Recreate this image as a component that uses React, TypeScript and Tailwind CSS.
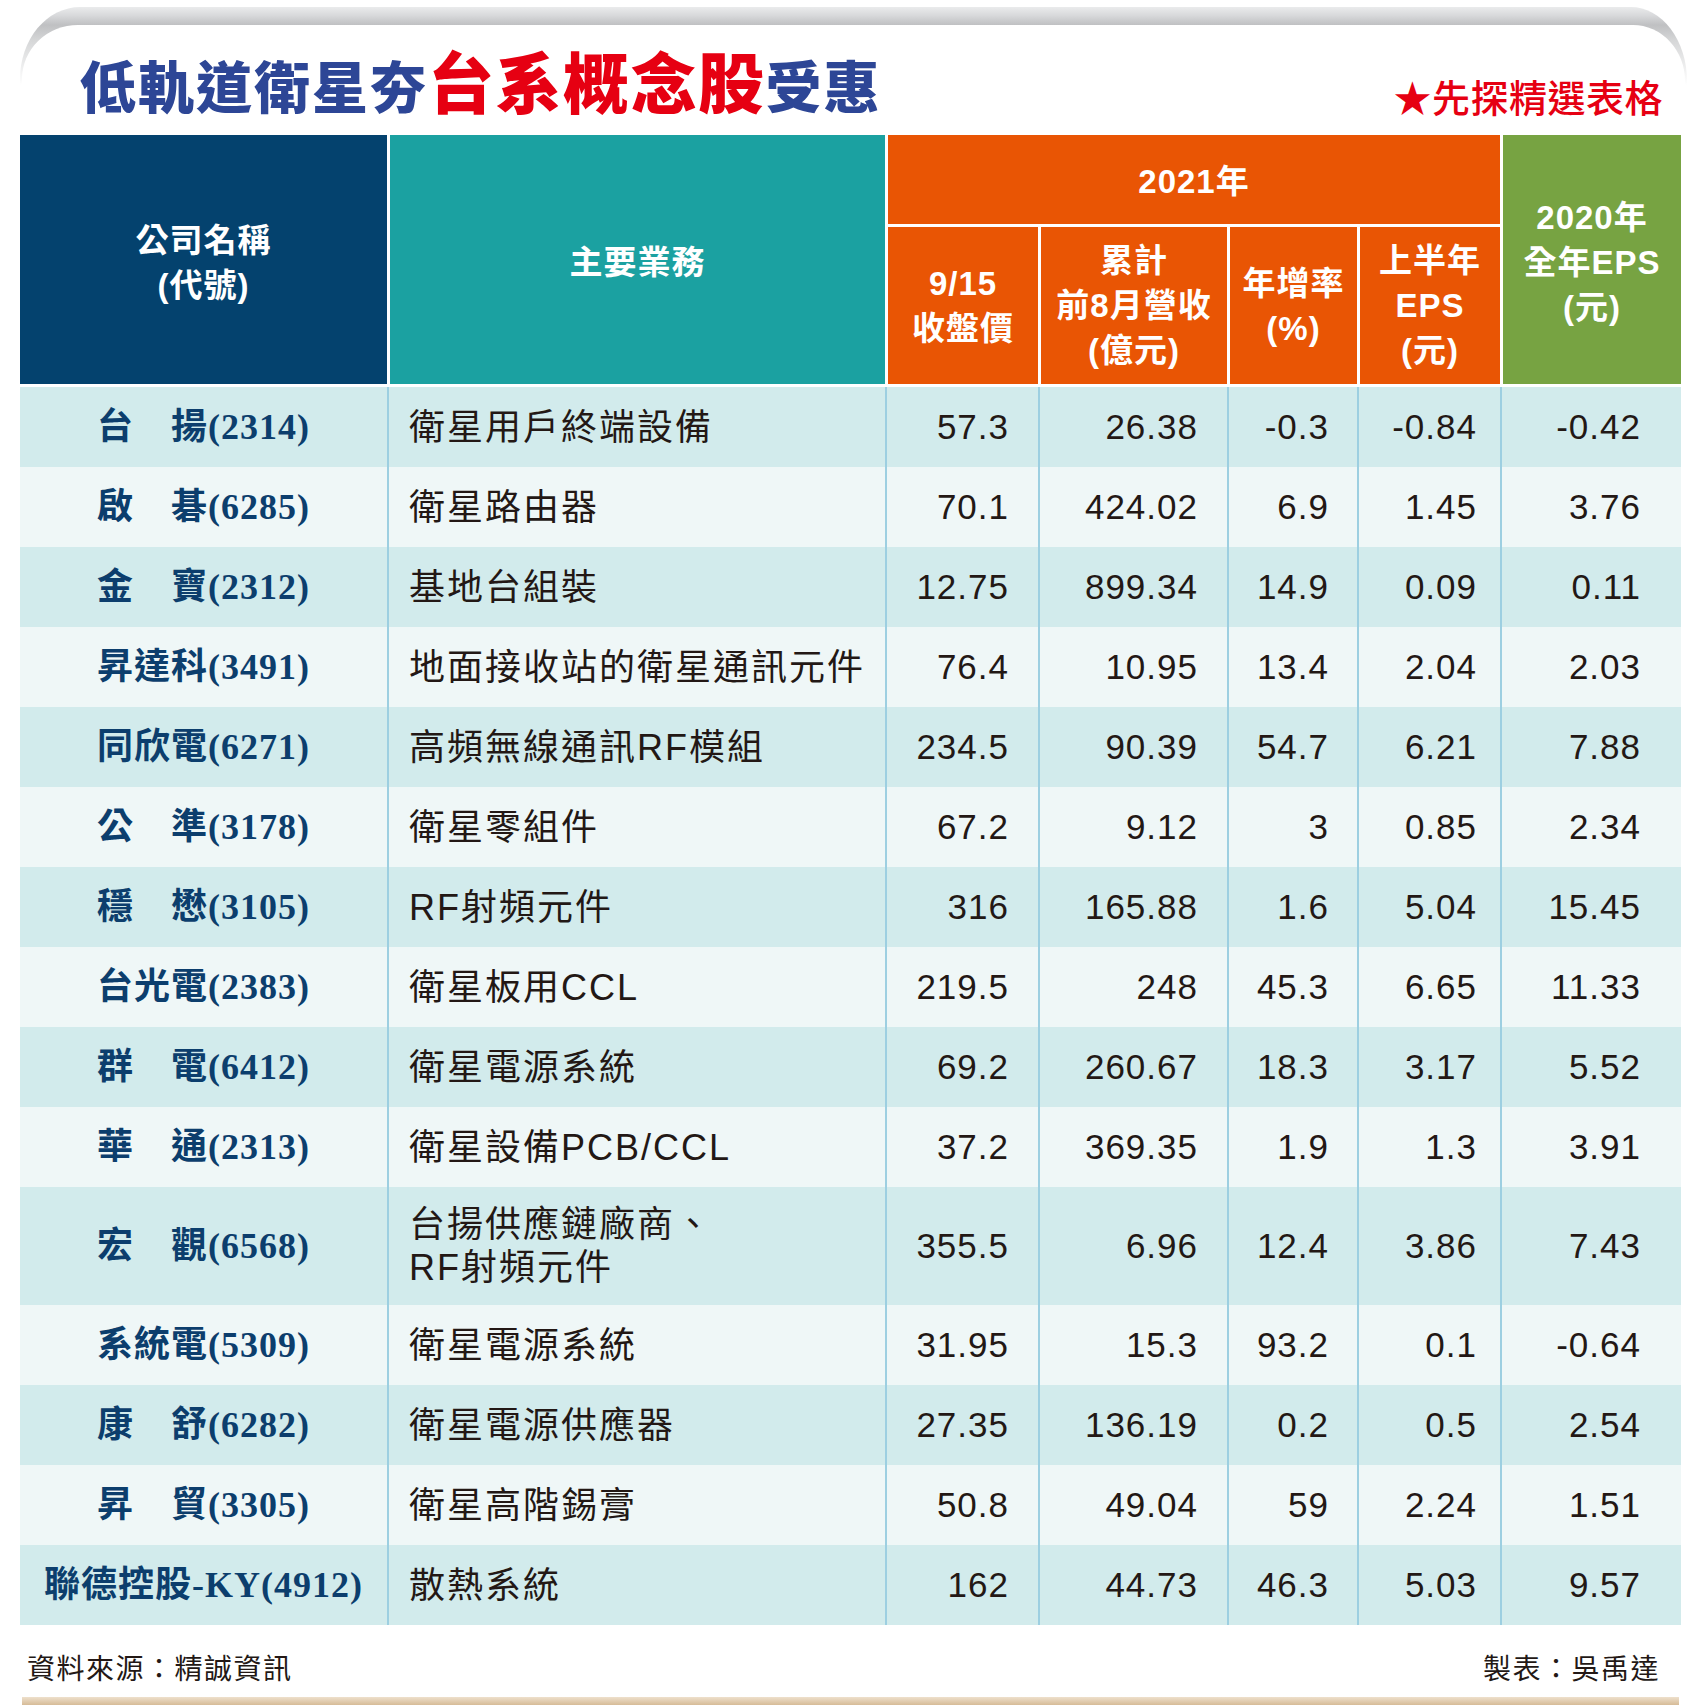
const rows: [string, string[], string, string, string, string, string][] = [
  ["台　揚(2314)", ["衛星用戶終端設備"], "57.3", "26.38", "-0.3", "-0.84", "-0.42"],
  ["啟　碁(6285)", ["衛星路由器"], "70.1", "424.02", "6.9", "1.45", "3.76"],
  ["金　寶(2312)", ["基地台組裝"], "12.75", "899.34", "14.9", "0.09", "0.11"],
  ["昇達科(3491)", ["地面接收站的衛星通訊元件"], "76.4", "10.95", "13.4", "2.04", "2.03"],
  ["同欣電(6271)", ["高頻無線通訊RF模組"], "234.5", "90.39", "54.7", "6.21", "7.88"],
  ["公　準(3178)", ["衛星零組件"], "67.2", "9.12", "3", "0.85", "2.34"],
  ["穩　懋(3105)", ["RF射頻元件"], "316", "165.88", "1.6", "5.04", "15.45"],
  ["台光電(2383)", ["衛星板用CCL"], "219.5", "248", "45.3", "6.65", "11.33"],
  ["群　電(6412)", ["衛星電源系統"], "69.2", "260.67", "18.3", "3.17", "5.52"],
  ["華　通(2313)", ["衛星設備PCB/CCL"], "37.2", "369.35", "1.9", "1.3", "3.91"],
  ["宏　觀(6568)", ["台揚供應鏈廠商、", "RF射頻元件"], "355.5", "6.96", "12.4", "3.86", "7.43"],
  ["系統電(5309)", ["衛星電源系統"], "31.95", "15.3", "93.2", "0.1", "-0.64"],
  ["康　舒(6282)", ["衛星電源供應器"], "27.35", "136.19", "0.2", "0.5", "2.54"],
  ["昇　貿(3305)", ["衛星高階錫膏"], "50.8", "49.04", "59", "2.24", "1.51"],
  ["聯德控股-KY(4912)", ["散熱系統"], "162", "44.73", "46.3", "5.03", "9.57"],
]

const numPad = ["pr-[29px]", "pr-[29px]", "pr-[28px]", "pr-[23px]", "pr-[40px]"]

function TitleFrame() {
  return (
    <div className="mt-[7px] ml-[20px] w-[1667px] h-[128px] rounded-tl-[60px_72px] rounded-tr-[56px_74px] bg-[linear-gradient(to_bottom,#eaebec_0px,#d9dadc_8px,#bfc0c2_18px,#d6d7d8_34px,#ffffff_78px)] pt-[18px] px-[2px]">
      <div className="h-full rounded-tl-[56px_54px] rounded-tr-[52px_56px] bg-white pl-[58px] pr-[22px] pt-[21px] flex items-baseline justify-between font-['Noto_Sans_CJK_TC',sans-serif]">
        <h1 className="font-black leading-[66px] text-[56px] tracking-[2px] text-[#2d4696]">
          低軌道衛星夯
          <span className="text-[66px] tracking-[1.5px] text-[#e60012]">台系概念股</span>
          受惠
        </h1>
        <div className="translate-y-[4px] text-[38px] leading-[40px] font-medium tracking-[0.5px] text-[#e60012]">
          ★先探精選表格
        </div>
      </div>
    </div>
  )
}

function Header() {
  return (
    <div className="grid grid-cols-[367px_498px_153px_189px_130px_143px_181px] grid-rows-[92px_157px] mb-[3px] text-white font-bold text-[33px] leading-[45px] tracking-[1px] text-center font-['Liberation_Sans','Noto_Sans_CJK_TC',sans-serif]">
      <div className="row-span-2 bg-[#04426e] flex flex-col items-center justify-center pt-[6px]">
        <span>公司名稱</span>
        <span>(代號)</span>
      </div>
      <div className="row-span-2 border-l-[3px] border-white bg-[#1ba1a1] flex items-center justify-center pt-[6px]">
        主要業務
      </div>
      <div className="col-span-4 border-l-[3px] border-b-[3px] border-white bg-[#e95504] flex items-center justify-center pt-[4px]">
        2021年
      </div>
      <div className="row-span-2 border-l-[3px] border-white bg-[#77a342] flex flex-col items-center justify-center pt-[6px]">
        <span>2020年</span>
        <span>全年EPS</span>
        <span>(元)</span>
      </div>
      <div className="border-l-[3px] border-white bg-[#e95504] flex flex-col items-center justify-center">
        <span>9/15</span>
        <span>收盤價</span>
      </div>
      <div className="border-l-[3px] border-white bg-[#e95504] flex flex-col items-center justify-center">
        <span>累計</span>
        <span>前8月營收</span>
        <span>(億元)</span>
      </div>
      <div className="border-l-[3px] border-white bg-[#e95504] flex flex-col items-center justify-center">
        <span>年增率</span>
        <span>(%)</span>
      </div>
      <div className="border-l-[3px] border-white bg-[#e95504] flex flex-col items-center justify-center">
        <span>上半年</span>
        <span>EPS</span>
        <span>(元)</span>
      </div>
    </div>
  )
}

function Row({ data, index }: { data: (typeof rows)[number]; index: number }) {
  const [name, biz, ...nums] = data
  const tall = biz.length > 1
  return (
    <div
      className={`grid grid-cols-[367px_498px_153px_189px_130px_143px_181px] ${tall ? "h-[118px]" : "h-[80px]"} ${
        index % 2 === 0 ? "bg-[#d2ebec]" : "bg-[#eff7f7]"
      }`}
    >
      <div className="flex items-center justify-center font-bold text-[36px] tracking-[1px] text-[#0c3e6d] font-['Liberation_Serif','Noto_Sans_CJK_TC',serif]">
        {name}
      </div>
      <div className="border-l-[2px] border-[#9dcfe1] flex flex-col justify-center pl-[20px] text-[36px] leading-[43px] tracking-[2px] text-[#231815] font-['Liberation_Sans','Noto_Sans_CJK_TC',sans-serif]">
        {biz.map((line) => (
          <span key={line}>{line}</span>
        ))}
      </div>
      {nums.map((n, i) => (
        <div
          key={i}
          className={`border-l-[2px] border-[#9dcfe1] flex items-center justify-end ${numPad[i]} text-[35px] tracking-[1px] text-[#231815] font-['Liberation_Sans',sans-serif]`}
        >
          {n}
        </div>
      ))}
    </div>
  )
}

export default function App() {
  return (
    <div className="w-[1701px] h-[1708px] overflow-hidden bg-white">
      <TitleFrame />
      <div className="ml-[20px] w-[1661px]">
        <Header />
        {rows.map((r, i) => (
          <Row key={r[0]} data={r} index={i} />
        ))}
        <div className="h-[72px] pt-[25px] pl-[7px] pr-[21px] flex justify-between text-[28px] leading-[34px] tracking-[1.5px] text-[#231815] font-['Noto_Sans_CJK_TC',sans-serif]">
          <span>資料來源：精誠資訊</span>
          <span>製表：吳禹達</span>
        </div>
      </div>
      <div className="ml-[22px] w-[1657px] h-[8px] bg-[linear-gradient(to_bottom,#eee0cc,#d6bb97)]" />
    </div>
  )
}
